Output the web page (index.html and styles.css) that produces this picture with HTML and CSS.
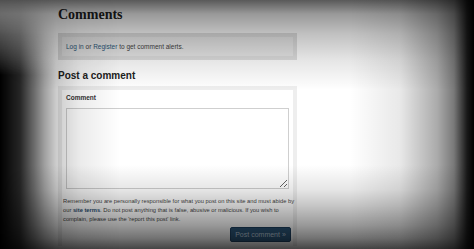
FILE: index.html
```html
<!DOCTYPE html>
<html>
  <head>
    <title>Comments</title>
    <link rel="stylesheet" href="styles.css">
  </head>
  <body>
    <div class="page">
      <h2 class="section-title">Comments</h2>
      <div class="alert-box">
        <a href="#">Log in</a> or <a href="#">Register</a> to get comment alerts.
      </div>
      <h3 class="form-title">Post a comment</h3>
      <form class="comment-form" action="">
        <label class="field-label" for="comment">Comment</label>
        <textarea id="comment" class="comment-input"></textarea>
        <p class="terms">
          Remember you are personally responsible for what you post on this site and must abide by
          our <a href="#" class="terms-link">site terms</a>. Do not post anything that is false, abusive or malicious. If you wish to
          complain, please use the 'report this post' link.
        </p>
        <div class="actions">
          <button type="button" class="submit-btn">Post comment &raquo;</button>
        </div>
      </form>
    </div>
    <div class="vignette"></div>
  </body>
</html>
```

FILE: styles.css
```css
html, body { margin: 0; padding: 0; }
body { width: 474px; height: 249px; overflow: hidden; position: relative; background: #fff; font-family: "Liberation Sans", Arial, sans-serif; color: #333; }

.page { padding: 7px 0 0 58px; width: 239px; }

.section-title { font-family: "Liberation Serif", "Times New Roman", serif; font-size: 14px; font-weight: bold; color: #222; margin: 0 0 10px; line-height: 16px; }

.alert-box { background: #ebebeb; border: 4px solid #e0e0e0; padding: 6px 4px 5px; font-size: 6.5px; line-height: 8px; color: #444; }
.alert-box a { color: #2d5a7d; text-decoration: none; }

.form-title { font-size: 10px; font-weight: bold; color: #222; margin: 10px 0 4px; line-height: 12px; }

.comment-form { border: 4px solid #eeeeee; border-bottom: none; background: #fff; padding: 3px 4px 4px; }
.field-label { display: block; font-size: 6.5px; font-weight: bold; color: #333; line-height: 9px; margin-bottom: 6px; }
.comment-input { display: block; box-sizing: border-box; width: 223px; height: 81px; border: 1px solid #cfcfcf; margin: 0; padding: 0; resize: vertical; background: #fff; }

.terms { margin: 8px -9px 0 -3px; font-size: 5.75px; line-height: 9px; color: #444; }
.terms-link { color: #1f4d70; font-weight: bold; text-decoration: none; }

.actions { display: flex; justify-content: flex-end; margin: 3px -2px 0 0; }
.submit-btn { background: #2b5578; color: #b9cad8; border: 1px solid #1e4060; border-radius: 2px; font-family: "Liberation Sans", Arial, sans-serif; font-size: 7px; white-space: nowrap; padding: 0 4px; width: 61px; height: 15px; }

.vignette { position: absolute; left: 0; top: 0; right: 0; bottom: 0; pointer-events: none;
  background:
    linear-gradient(to right, rgba(0,0,0,0) 350px, rgba(0,0,0,.09) 400px, rgba(0,0,0,.33) 437px, rgba(0,0,0,.53) 454px, rgba(0,0,0,.9) 467px, rgba(0,0,0,1) 474px),
    linear-gradient(to bottom, rgba(0,0,0,.65) 0, rgba(0,0,0,.4) 14px, rgba(0,0,0,.25) 33px, rgba(0,0,0,.1) 60px, rgba(0,0,0,0) 90px, rgba(0,0,0,0) 165px, rgba(0,0,0,.1) 190px, rgba(0,0,0,.22) 205px, rgba(0,0,0,.4) 225px, rgba(0,0,0,.55) 238px, rgba(0,0,0,.73) 249px); }
.vignette::before { content: ""; position: absolute; left: 0; top: 0; bottom: 0; width: 130px;
  background: linear-gradient(to right, rgba(0,0,0,1) 0, rgba(0,0,0,.85) 20px, rgba(0,0,0,.6) 33px, rgba(0,0,0,.37) 45px, rgba(0,0,0,.2) 56px, rgba(0,0,0,.08) 80px, rgba(0,0,0,0) 120px);
  -webkit-mask-image: linear-gradient(to bottom, rgba(0,0,0,.1) 0, rgba(0,0,0,.6) 35px, #000 75px);
  mask-image: linear-gradient(to bottom, rgba(0,0,0,.1) 0, rgba(0,0,0,.6) 35px, #000 75px); }
```
